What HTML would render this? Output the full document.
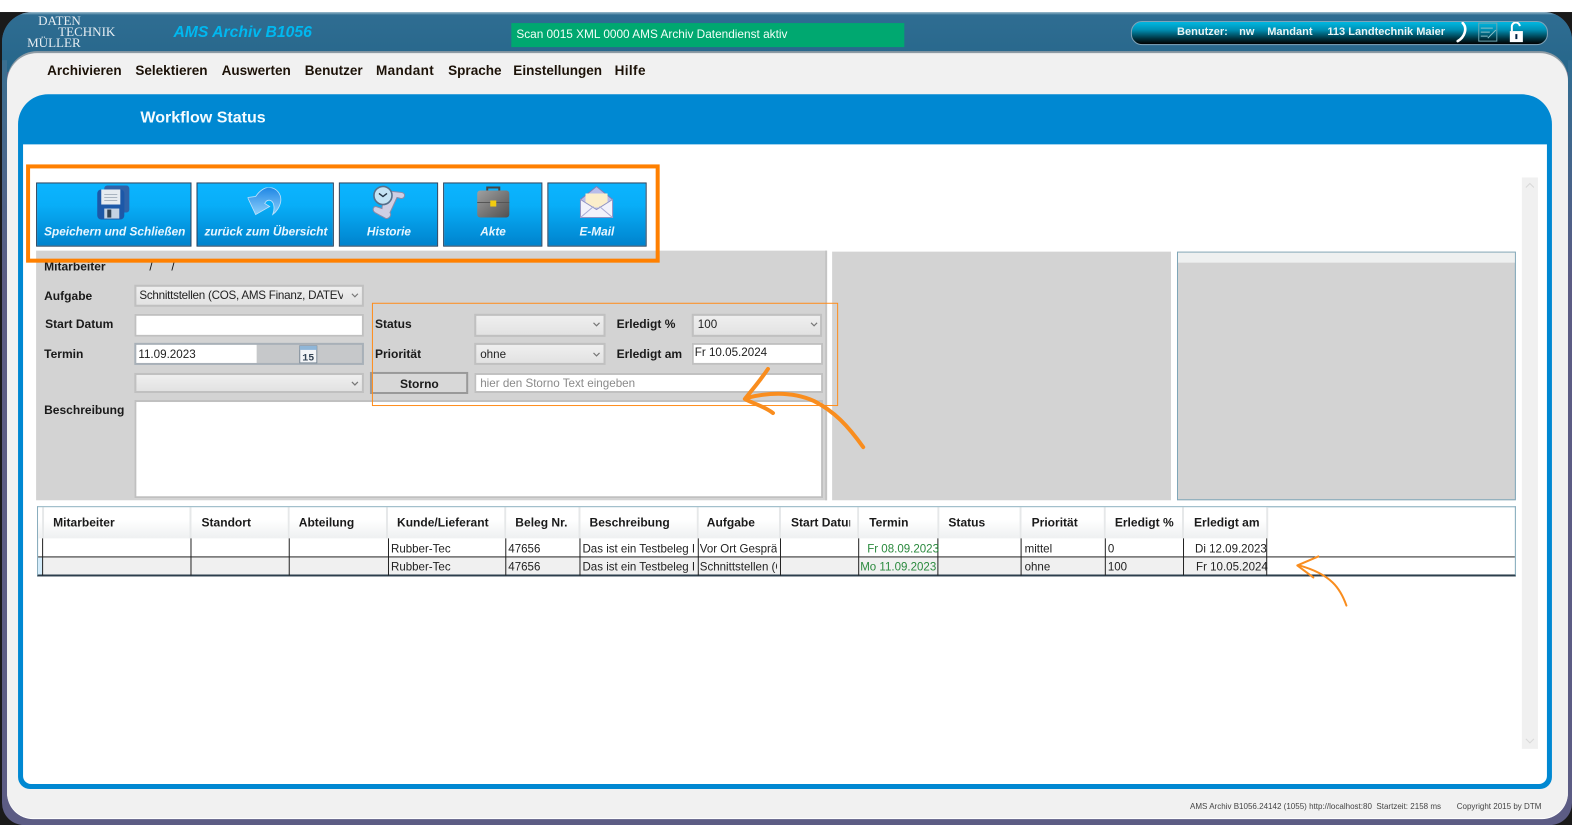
<!DOCTYPE html>
<html lang="de"><head><meta charset="utf-8"><title>Workflow Status</title>
<style>
html,body{margin:0;padding:0;background:#fff}
#p{position:relative;width:1572px;height:825px;overflow:hidden;background:#fff;font-family:"Liberation Sans",sans-serif;color:#111}
#q{position:absolute;left:0;top:0;width:1568px;height:823px;transform:scale(1.00255);transform-origin:0 0}
#p #q div,#p #q span,#p #q svg{position:absolute}
.t{white-space:nowrap;line-height:16px;margin-top:1px}
.l{font-size:12px;font-weight:bold;color:#1a1a1a;margin-top:0}
.m{font-size:13.5px;font-weight:bold;color:#1c1208;top:62px}
.f{background:#fff;border:2px solid #c0c0c0;box-sizing:border-box}
.s{background:linear-gradient(#efefef,#e2e2e2);border:2px solid #c0c0c0;box-sizing:border-box}
.v{font-size:11.6px;color:#222}
.b{top:182px;height:64px;box-sizing:border-box;border:1px solid #26405c;background:linear-gradient(#0cb4ff 0,#08aef8 35%,#0083cd 100%)}
.bt{top:223px;font-size:11.8px;font-weight:bold;font-style:italic;color:#e8f6ff;margin-top:0}
.h{top:506px;height:31px;background:linear-gradient(#fff,#fff 40%,#eef0f1);border-right:2px solid #e6e8e9;box-sizing:border-box}
.ht{top:513px;font-size:12px;font-weight:bold;color:#1a1a1a;margin-top:0}
.c{font-size:11.5px;color:#222;top:539px}
.c2{top:557px}
.g{color:#2b8a3e}
.vl{width:1.4px;top:537px;height:37px;background:#222}
.lg{font-family:"Liberation Serif",serif;font-size:13px;color:#e6edf2;line-height:12px;margin-top:0}
</style></head><body><div id="p"><div id="q">
<!-- frame -->
<div style="left:0;top:12px;width:1568px;height:811px;background:#1a1a1a"></div>
<div style="left:2px;top:12px;width:1566px;height:811px;background:#5c5c84;border-radius:30px 28px 22px 22px"></div>
<div style="left:2px;top:12px;width:1566px;height:60px;background:linear-gradient(#9dbccd 0,#2f6d92 3px,#26668a 100%);border-radius:30px 28px 0 0"></div>
<div style="left:2px;top:60px;width:5px;height:740px;background:linear-gradient(#3a6f90,#5c5c84 30%)"></div>
<div style="left:1564px;top:60px;width:4px;height:740px;background:linear-gradient(#2f6d92,#5c5c84 30%)"></div>
<div style="left:7px;top:53px;width:1557px;height:763px;background:#f1f1f1;border-radius:30px 28px 26px 26px;box-shadow:0 -2px 0 #8e9ba4,0 1px 0 #fff"></div>
<!-- logo -->
<div class="t lg" style="left:38px;top:15px">DATEN</div>
<div class="t lg" style="left:58px;top:26px">TECHNIK</div>
<div class="t lg" style="left:27px;top:37px">MÜLLER</div>
<div class="t" style="left:173px;top:24px;font-size:15.7px;font-weight:bold;font-style:italic;color:#00b8f0">AMS Archiv B1056</div>
<!-- status -->
<div style="left:510px;top:23px;width:392px;height:24px;background:#00a870"></div>
<div class="t" style="left:515px;top:25px;font-size:11.8px;color:#f2fff8">Scan 0015 XML 0000 AMS Archiv Datendienst aktiv</div>
<!-- user pill -->
<div style="left:1128px;top:21px;width:416px;height:24px;box-sizing:border-box;border-radius:11px;border:1px solid #7fa3b8;background:linear-gradient(#00b9e2 0,#0090b4 35%,#00323f 75%,#000 100%)"></div>
<div class="t" style="left:1174px;top:23px;font-size:11px;font-weight:bold;color:#e8f4f4">Benutzer:</div>
<div class="t" style="left:1236px;top:23px;font-size:11px;font-weight:bold;color:#e8f4f4">nw</div>
<div class="t" style="left:1264px;top:23px;font-size:11px;font-weight:bold;color:#e8f4f4">Mandant</div>
<div class="t" style="left:1324px;top:23px;font-size:11px;font-weight:bold;color:#e8f4f4">113 Landtechnik Maier</div>
<svg style="left:1452px;top:22px" width="16" height="22" viewBox="0 0 16 22"><path d="M7 1 C12 6 9 15 2 19" fill="none" stroke="#fff" stroke-width="2.6" stroke-linecap="round"/></svg>
<svg style="left:1474px;top:22px" width="22" height="21" viewBox="0 0 22 21"><rect x="1" y="1" width="18" height="18" fill="none" stroke="#6fa8b4"/><path d="M3 6h12M3 10h9M3 14h7M10 16 18 8" stroke="#8cc0c8" fill="none"/></svg>
<svg style="left:1505px;top:22px" width="16" height="22" viewBox="0 0 16 22"><rect x="1" y="9" width="13" height="11" fill="#fff"/><path d="M3 9V5a4 4 0 0 1 8-1" fill="none" stroke="#fff" stroke-width="2"/><rect x="6.5" y="12" width="2" height="5" fill="#024"/></svg>
<!-- menu -->
<div class="t m" style="left:47px">Archivieren</div>
<div class="t m" style="left:135px">Selektieren</div>
<div class="t m" style="left:221px">Auswerten</div>
<div class="t m" style="left:304px">Benutzer</div>
<div class="t m" style="left:375px;letter-spacing:.35px">Mandant</div>
<div class="t m" style="left:447px">Sprache</div>
<div class="t m" style="left:512px">Einstellungen</div>
<div class="t m" style="left:613px;letter-spacing:.4px">Hilfe</div>
<!-- blue card -->
<div style="left:18px;top:94px;width:1530px;height:693px;background:#0088d2;border-radius:30px 30px 12px 12px"></div>
<div style="left:23px;top:144px;width:1520px;height:638px;background:#fff;border-radius:0 0 8px 8px"></div>
<div class="t" style="left:140px;top:109px;font-size:16px;font-weight:bold;color:#f4fbff">Workflow Status</div>
<!-- scrollbar -->
<div style="left:1518px;top:177px;width:16px;height:570px;background:#f0f0f0"></div>
<svg style="left:1518px;top:178px" width="16" height="14"><path d="M4 9l4-4 4 4" fill="none" stroke="#d8d8d8"/></svg>
<svg style="left:1518px;top:732px" width="16" height="14"><path d="M4 5l4 4 4-4" fill="none" stroke="#d8d8d8"/></svg>
<!-- panels -->
<div style="left:36px;top:250px;width:787px;height:249px;background:#d3d3d3;border-right:2px solid #c4c4c4;box-sizing:content-box"></div>
<div style="left:830px;top:251px;width:338px;height:248px;background:#d3d3d3"></div>
<div style="left:1174px;top:251px;width:338px;height:248px;box-sizing:border-box;background:#d3d3d3;border:1px solid #7ea6b8"></div>
<div style="left:1175px;top:252px;width:336px;height:10px;background:#eef0f0"></div>
<!-- buttons -->
<div class="b" style="left:36px;width:155px"></div>
<div class="b" style="left:196px;width:137px"></div>
<div class="b" style="left:338px;width:99px"></div>
<div class="b" style="left:442px;width:99px"></div>
<div class="b" style="left:546px;width:99px"></div>
<div class="t bt" style="left:44px">Speichern und Schließen</div>
<div class="t bt" style="left:204px">zurück zum Übersicht</div>
<div class="t bt" style="left:366px">Historie</div>
<div class="t bt" style="left:479px">Akte</div>
<div class="t bt" style="left:578px">E-Mail</div>
<!-- icons -->
<svg style="left:95px;top:184px" width="36" height="36" viewBox="0 0 36 36"><rect x="9" y="1" width="25" height="27" rx="3" fill="#2f62a8"/><rect x="2" y="5" width="27" height="30" rx="4" fill="#1c58a8"/><rect x="6" y="5" width="19" height="15" fill="#e6ebf0"/><path d="M9 10h13M9 13h13M9 16h13" stroke="#a9b4c0"/><rect x="9" y="24" width="15" height="10" fill="#c4d2e2"/><rect x="12" y="25" width="4" height="8" fill="#345"/></svg>
<svg style="left:247px;top:187px" width="36" height="29" viewBox="0 0 36 29"><defs><linearGradient id="ag" x1="0" y1="0" x2="0" y2="1"><stop offset="0" stop-color="#1f86e4"/><stop offset="1" stop-color="#8cd0fb"/></linearGradient></defs><path d="M0 10 8 9C12 3 17 0 21 0 29 0 34 7 33 14 32 20 28 25 25 27 27 22 27 15 23 13 20 12 18 14 17 16L22 19 8 27Z" fill="url(#ag)" stroke="#bfe2fa" stroke-width=".8"/></svg>
<svg style="left:369px;top:184px" width="36" height="36" viewBox="0 0 36 36"><path d="M14 6 32 8C36 9 35 14 31 14L27 13 20 28C22 31 19 34 16 34L5 28C2 26 3 22 6 22L12 24Z" fill="#cfcfe4" stroke="#8a8aa8"/><circle cx="13" cy="11" r="9" fill="#c4e3f4" stroke="#55708c" stroke-width="1.6"/><path d="M9 9l4 3 4-3" fill="none" stroke="#234" stroke-width="1.4"/></svg>
<svg style="left:475px;top:185px" width="34" height="34" viewBox="0 0 34 34"><defs><linearGradient id="bg" x1="0" y1="0" x2="1" y2="1"><stop offset="0" stop-color="#a0a0a0"/><stop offset="1" stop-color="#505050"/></linearGradient></defs><path d="M11 5V2h12v3" fill="none" stroke="#444" stroke-width="2"/><rect x="1" y="5" width="32" height="27" rx="3" fill="url(#bg)"/><path d="M1 17H33" stroke="#555"/><rect x="14" y="15" width="6" height="6" fill="#f2cc10"/></svg>
<svg style="left:578px;top:185px" width="34" height="34" viewBox="0 0 34 34"><path d="M1 14 17 1 33 14V32H1Z" fill="#b9bdea" stroke="#7c80b8"/><rect x="6" y="8" width="22" height="14" fill="#fbeecb"/><path d="M1 14 17 24 33 14V32H1Z" fill="#f2f2fb" stroke="#8f93c4"/><path d="M1 32 14 21M33 32 20 21" stroke="#a8abd4"/></svg>
<!-- labels -->
<div class="t l" style="left:44px;top:258px">Mitarbeiter</div>
<div class="t" style="left:149px;top:257px;font-size:12px">/</div>
<div class="t" style="left:171px;top:257px;font-size:12px">/</div>
<div class="t l" style="left:44px;top:287px">Aufgabe</div>
<div class="t l" style="left:45px;top:315px">Start Datum</div>
<div class="t l" style="left:44px;top:345px">Termin</div>
<div class="t l" style="left:44px;top:401px">Beschreibung</div>
<div class="t l" style="left:374px;top:315px">Status</div>
<div class="t l" style="left:374px;top:345px">Priorität</div>
<div class="t l" style="left:615px;top:315px">Erledigt %</div>
<div class="t l" style="left:615px;top:345px">Erledigt am</div>
<!-- fields -->
<div class="s" style="left:134px;top:283.500px;width:229px;height:22.500px"></div>
<div class="t v" style="left:139px;top:286px;width:203px;overflow:hidden;letter-spacing:-.25px">Schnittstellen (COS, AMS Finanz, DATEV</div>
<div class="f" style="left:134px;top:312.500px;width:229px;height:23px"></div>
<div style="left:134px;top:342px;width:229px;height:22px;box-sizing:border-box;border:2px solid #a8b0b8;background:#c6c8ca"></div>
<div style="left:136px;top:344px;width:120px;height:18px;background:#fff"></div>
<div class="t v" style="left:138px;top:345px">11.09.2023</div>
<svg style="left:298px;top:344px" width="20" height="19" viewBox="0 0 20 19"><rect x="1" y="1" width="17" height="17" fill="#f3f5f7" stroke="#7c8a98"/><rect x="1" y="1" width="17" height="4" fill="#8fb6d8"/><text x="9.500" y="15.500" font-size="10" font-weight="bold" font-family="Liberation Mono,monospace" fill="#345" text-anchor="middle">15</text></svg>
<div class="s" style="left:134px;top:371.500px;width:229px;height:20.500px"></div>
<div style="left:369px;top:371px;width:98px;height:22px;box-sizing:border-box;border:2px solid #999;background:#d8d8d8"></div>
<div class="t" style="left:399px;top:374px;font-size:12px;font-weight:bold;color:#1a1a1a">Storno</div>
<div class="s" style="left:473px;top:312.500px;width:131px;height:23px"></div>
<div class="s" style="left:473px;top:342px;width:131px;height:22px"></div>
<div class="t v" style="left:479px;top:345px">ohne</div>
<div class="s" style="left:690px;top:312.500px;width:130px;height:23px"></div>
<div class="t v" style="left:696px;top:315px">100</div>
<div class="f" style="left:690px;top:342px;width:131px;height:22px"></div>
<div class="t v" style="left:693px;top:343px">Fr 10.05.2024</div>
<div class="f" style="left:473px;top:371.500px;width:348px;height:20.500px"></div>
<div class="t v" style="left:479px;top:374px;color:#8a8a8a">hier den Storno Text eingeben</div>
<div class="f" style="left:134px;top:398.500px;width:687px;height:98.500px"></div>
<svg style="left:0;top:0" width="1568" height="823"><g fill="none" stroke="#777" stroke-width="1.2"><path d="M351 293l3 3 3-3M351 381l3 3 3-3M592 322l3 3 3-3M592 352l3 3 3-3M809 322l3 3 3-3"/></g></svg>
<!-- orange -->
<div style="left:26px;top:164px;width:632px;height:98px;box-sizing:border-box;border:4px solid #ff8000"></div>
<div style="left:371px;top:302px;width:465px;height:103px;box-sizing:border-box;border:1px solid #ff8c1a"></div>
<svg style="left:0;top:0" width="1568" height="823"><g fill="none" stroke="#f98d1e" stroke-linecap="round" stroke-linejoin="round"><path d="M861 446C846 425 832 410 812 400 792 391 768 391 744 397" stroke-width="4"/><path d="M766 368C758 380 750 389 743 398 752 403 762 405 771 412" stroke-width="4"/></g></svg>
<!-- table -->
<div style="left:37px;top:505px;width:1475px;height:70px;box-sizing:border-box;border:1px solid #7ea6b8;border-bottom:2px solid #2c3e4c;background:#fff"></div>
<div class="h" style="left:38px;width:6px"></div>
<div class="h" style="left:44px;width:147px"></div>
<div class="h" style="left:191px;width:98px"></div>
<div class="h" style="left:289px;width:98px"></div>
<div class="h" style="left:387px;width:118px"></div>
<div class="h" style="left:505px;width:74px"></div>
<div class="h" style="left:579px;width:118px"></div>
<div class="h" style="left:697px;width:82px"></div>
<div class="h" style="left:779px;width:78px"></div>
<div class="h" style="left:857px;width:80px"></div>
<div class="h" style="left:937px;width:82px"></div>
<div class="h" style="left:1019px;width:84px"></div>
<div class="h" style="left:1103px;width:78px"></div>
<div class="h" style="left:1181px;width:84px"></div>
<div class="t ht" style="left:53px">Mitarbeiter</div>
<div class="t ht" style="left:201px">Standort</div>
<div class="t ht" style="left:298px">Abteilung</div>
<div class="t ht" style="left:396px">Kunde/Lieferant</div>
<div class="t ht" style="left:514px">Beleg Nr.</div>
<div class="t ht" style="left:588px">Beschreibung</div>
<div class="t ht" style="left:705px">Aufgabe</div>
<div class="t ht" style="left:789px;width:59px;overflow:hidden">Start Datum</div>
<div class="t ht" style="left:867px">Termin</div>
<div class="t ht" style="left:946px">Status</div>
<div class="t ht" style="left:1029px">Priorität</div>
<div class="t ht" style="left:1112px">Erledigt %</div>
<div class="t ht" style="left:1191px">Erledigt am</div>
<div style="left:43px;top:556px;width:1221px;height:17px;background:#f0f0f0"></div>
<div style="left:38px;top:556px;width:5px;height:17px;background:#d4ecfa"></div>
<div style="left:38px;top:555px;width:1473px;height:1.200px;background:#222"></div>
<div class="vl" style="left:42px;width:1px"></div>
<div class="vl" style="left:189.500px"></div><div class="vl" style="left:287.500px"></div><div class="vl" style="left:387px"></div><div class="vl" style="left:504px"></div><div class="vl" style="left:578px"></div><div class="vl" style="left:695.500px"></div><div class="vl" style="left:777.500px"></div><div class="vl" style="left:856px"></div><div class="vl" style="left:935px"></div><div class="vl" style="left:1018px"></div><div class="vl" style="left:1101.500px"></div><div class="vl" style="left:1179.500px"></div><div class="vl" style="left:1263px"></div>
<div class="t c" style="left:390px">Rubber-Tec</div><div class="t c" style="left:507px">47656</div><div class="t c" style="left:581px;width:112px;overflow:hidden">Das ist ein Testbeleg It</div><div class="t c" style="left:698px;width:77px;overflow:hidden">Vor Ort Gespräch</div><div class="t c g" style="left:865px">Fr 08.09.2023</div><div class="t c" style="left:1022px">mittel</div><div class="t c" style="left:1105px">0</div><div class="t c" style="left:1192px">Di 12.09.2023</div>
<div class="t c c2" style="left:390px">Rubber-Tec</div><div class="t c c2" style="left:507px">47656</div><div class="t c c2" style="left:581px;width:112px;overflow:hidden">Das ist ein Testbeleg It</div><div class="t c c2" style="left:698px;width:77px;overflow:hidden">Schnittstellen (COS</div><div class="t c c2 g" style="left:858px">Mo 11.09.2023</div><div class="t c c2" style="left:1022px">ohne</div><div class="t c c2" style="left:1105px">100</div><div class="t c c2" style="left:1193px">Fr 10.05.2024</div>
<svg style="left:0;top:0" width="1568" height="823"><g fill="none" stroke="#f98d1e" stroke-linecap="round" stroke-linejoin="round" stroke-width="2"><path d="M1343 604C1337 587 1328 573 1296 564"/><path d="M1315 555 1294 564 1310 576"/></g></svg>
<!-- footer -->
<div class="t" style="left:1187px;top:796px;font-size:8px;color:#444">AMS Archiv B1056.24142 (1055) http://localhost:80&nbsp; Startzeit: 2158 ms</div>
<div class="t" style="left:1453px;top:796px;font-size:8px;color:#444">Copyright 2015 by DTM</div>
</div></div></body></html>
